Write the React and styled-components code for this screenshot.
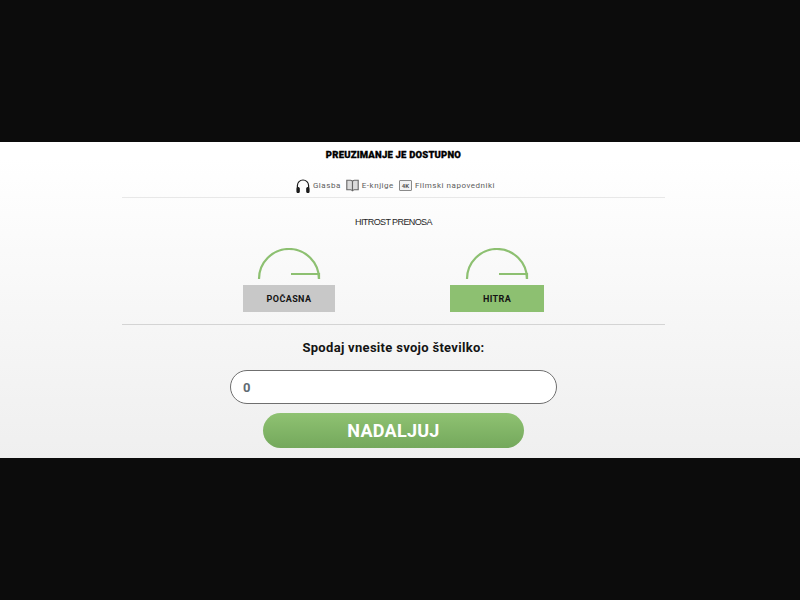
import styled, { createGlobalStyle } from "styled-components";

const GlobalStyle = createGlobalStyle`
  html, body {
    margin: 0;
    padding: 0;
    height: 100%;
    background: #0c0c0c;
    font-family: Roboto, "Liberation Sans", sans-serif;
  }
`;

const Page = styled.div`
  height: 600px;
  display: flex;
  flex-direction: column;
  justify-content: center;
  overflow: hidden;
`;

const Band = styled.main`
  height: 316px;
  background: linear-gradient(#ffffff, #ffffff 5%, #efefef);
  padding-left: 122px;
  box-sizing: border-box;
  overflow: hidden;
`;

const Content = styled.div`
  width: 543px;
  display: flex;
  flex-direction: column;
  align-items: center;
`;

const Title = styled.h1`
  margin: 7px 0 0;
  height: 12px;
  font-size: 9.5px;
  line-height: 12px;
  font-weight: 900;
  letter-spacing: 0.2px;
  color: #000;
  white-space: nowrap;
  -webkit-text-stroke: 0.3px #000;
`;

const Features = styled.div`
  margin-top: 13px;
  width: 100%;
  height: 24px;
  display: flex;
  justify-content: center;
  align-items: center;
  gap: 5px;
  border-bottom: 1px solid #e8e8e8;
  padding-left: 4px;
  box-sizing: border-box;
`;

const Feature = styled.span`
  display: flex;
  align-items: center;
  gap: 3px;
  font-size: 8px;
  letter-spacing: 0.53px;
  color: #5c5c5c;
  white-space: nowrap;
`;

const SpeedLabel = styled.div`
  margin-top: 18px;
  font-family: "Liberation Sans", Arial, sans-serif;
  font-size: 9px;
  line-height: 12px;
  letter-spacing: -0.6px;
  color: #262626;
`;

const Speeds = styled.div`
  margin-top: 20px;
  width: 100%;
  padding-bottom: 12px;
  border-bottom: 1px solid #d4d4d4;
  display: flex;
  justify-content: center;
  gap: 115px;
`;

const Speed = styled.div`
  width: ${(p) => p.$width}px;
  display: flex;
  flex-direction: column;
  align-items: center;
  gap: 6px;
`;

const SpeedTag = styled.div`
  width: 100%;
  height: 27px;
  display: flex;
  align-items: center;
  justify-content: center;
  background: ${(p) => (p.$fast ? "#8dc071" : "#c8c8c8")};
  font-size: 9px;
  font-weight: 700;
  letter-spacing: 0.4px;
  color: #141414;
`;

const Prompt = styled.p`
  margin: 15px 0 0;
  font-size: 13px;
  line-height: 16px;
  font-weight: 700;
  letter-spacing: 0.3px;
  color: #141414;
`;

const NumberInput = styled.input`
  margin-top: 14px;
  width: 327px;
  height: 34px;
  box-sizing: border-box;
  border: 1px solid #6f6f6f;
  border-radius: 17px;
  background: #fff;
  padding: 0 12px;
  font-family: inherit;
  font-size: 13px;
  font-weight: 700;
  color: #5f6b73;
  outline: none;
`;

const SubmitButton = styled.button`
  margin-top: 9px;
  width: 261px;
  height: 35px;
  border: 0;
  border-radius: 18px;
  background: linear-gradient(#8fc272, #74a85c);
  font-family: inherit;
  font-size: 18px;
  font-weight: 700;
  letter-spacing: 0.25px;
  color: #fff;
  padding: 0;
`;

const Gauge = () => (
  <svg width="64" height="31" viewBox="0 0 64 31" fill="none" stroke="#8dc071" strokeWidth="2.2">
    <path d="M2 31 A30 30 0 0 1 62 31" />
    <path d="M34 26 H62 V31" />
  </svg>
);

const Headphones = () => (
  <svg width="14" height="14" viewBox="0 0 14 14" fill="none" stroke="#1c1c1c" strokeWidth="1.2">
    <path d="M1.4 9 V6.6 a5.6 5.6 0 0 1 11.2 0 V9" />
    <rect x="1" y="8.5" width="2.2" height="5" rx="1" fill="#1c1c1c" />
    <rect x="10.8" y="8.5" width="2.2" height="5" rx="1" fill="#1c1c1c" />
  </svg>
);

const Book = () => (
  <svg width="13" height="13" viewBox="0 0 13 13" fill="#dcdcdc" stroke="#666" strokeWidth="1.1">
    <path d="M0.8 1.2 H4.6 Q6.5 1.2 6.5 3 V12 Q6 10.8 4.6 10.8 H0.8 Z" />
    <path d="M12.2 1.2 H8.4 Q6.5 1.2 6.5 3 V12 Q7 10.8 8.4 10.8 H12.2 Z" />
  </svg>
);

const FourK = styled.span`
  width: 11px;
  height: 9px;
  display: flex;
  align-items: center;
  justify-content: center;
  border: 1px solid #8a8a8a;
  border-radius: 1px;
  background: #f2f2f2;
  font-size: 6px;
  font-weight: 700;
  letter-spacing: 0;
  color: #555;
`;

export default function App() {
  return (
    <>
      <GlobalStyle />
      <Page>
        <Band>
          <Content>
            <Title>PREUZIMANJE JE DOSTUPNO</Title>
            <Features>
              <Feature><Headphones />Glasba</Feature>
              <Feature><Book />E-knjige</Feature>
              <Feature><FourK>4K</FourK>Filmski napovedniki</Feature>
            </Features>
            <SpeedLabel>HITROST PRENOSA</SpeedLabel>
            <Speeds>
              <Speed $width={92}>
                <Gauge />
                <SpeedTag>POČASNA</SpeedTag>
              </Speed>
              <Speed $width={94}>
                <Gauge />
                <SpeedTag $fast>HITRA</SpeedTag>
              </Speed>
            </Speeds>
            <Prompt>Spodaj vnesite svojo številko:</Prompt>
            <NumberInput defaultValue="0" />
            <SubmitButton>NADALJUJ</SubmitButton>
          </Content>
        </Band>
      </Page>
    </>
  );
}
